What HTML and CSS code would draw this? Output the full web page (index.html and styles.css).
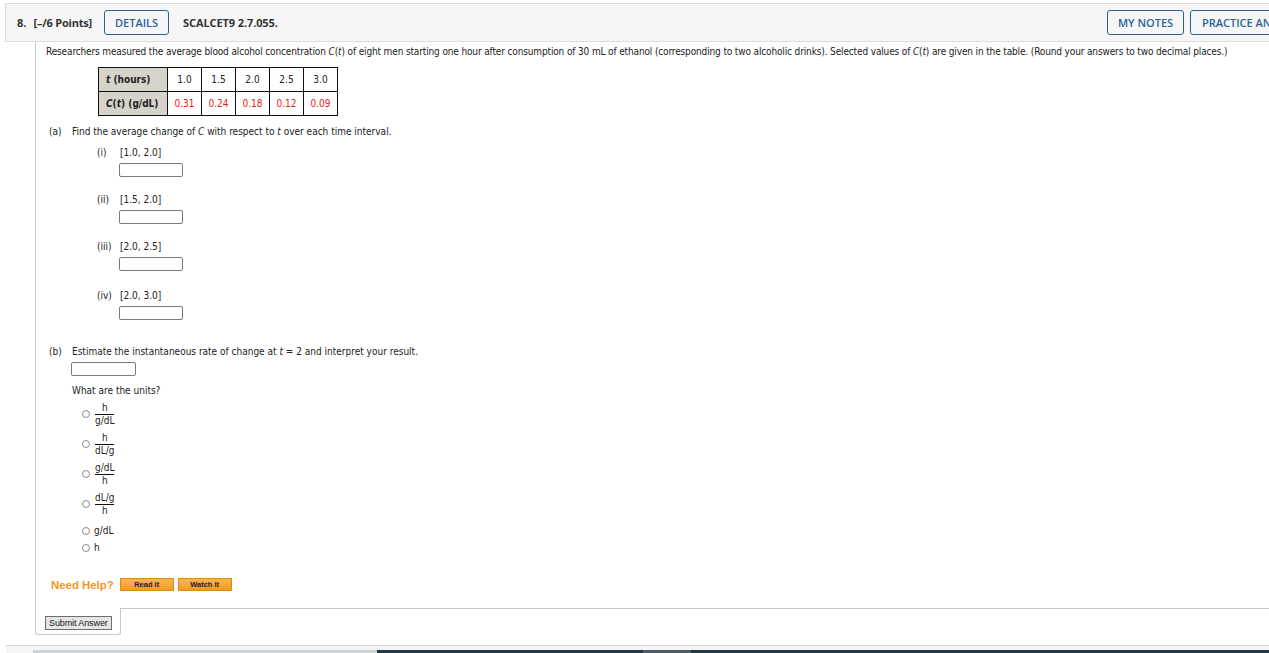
FILE: index.html
```html
<!DOCTYPE html>
<html>
<head>
<meta charset="utf-8">
<link rel="stylesheet" href="styles.css">
</head>
<body>
<div class="page">
  <div class="qhead">
    <span class="qnum">8.</span>
    <span class="qpts">[–/6 Points]</span>
    <span class="btn-out btn-details">DETAILS</span>
    <span class="qcode">SCALCET9 2.7.055.</span>
    <div class="qright">
      <span class="btn-out btn-notes">MY NOTES</span>
      <span class="btn-out btn-practice">PRACTICE ANOTHER</span>
    </div>
  </div>

  <div class="qbody">
    <p class="intro">Researchers measured the average blood alcohol concentration <i>C</i>(<i>t</i>) of eight men starting one hour after consumption of 30 mL of ethanol (corresponding to two alcoholic drinks). Selected values of <i>C</i>(<i>t</i>) are given in the table. (Round your answers to two decimal places.)</p>

    <table class="data">
      <tr>
        <th><i>t</i> (hours)</th>
        <td>1.0</td><td>1.5</td><td>2.0</td><td>2.5</td><td>3.0</td>
      </tr>
      <tr>
        <th><i>C</i>(<i>t</i>) (g/dL)</th>
        <td class="red">0.31</td><td class="red">0.24</td><td class="red">0.18</td><td class="red">0.12</td><td class="red">0.09</td>
      </tr>
    </table>

    <div class="part part-a">
      <span class="plabel">(a)</span>
      <span>Find the average change of <i>C</i> with respect to <i>t</i> over each time interval.</span>
    </div>

    <div class="sub sub-1">
      <div class="subline"><span class="slabel">(i)</span><span>[1.0, 2.0]</span></div>
      <div class="box box-sub"></div>
    </div>
    <div class="sub">
      <div class="subline"><span class="slabel">(ii)</span><span>[1.5, 2.0]</span></div>
      <div class="box box-sub"></div>
    </div>
    <div class="sub">
      <div class="subline"><span class="slabel">(iii)</span><span>[2.0, 2.5]</span></div>
      <div class="box box-sub"></div>
    </div>
    <div class="sub sub-4">
      <div class="subline"><span class="slabel">(iv)</span><span>[2.0, 3.0]</span></div>
      <div class="box box-sub"></div>
    </div>

    <div class="part part-b">
      <span class="plabel">(b)</span>
      <span>Estimate the instantaneous rate of change at <i>t</i> = 2 and interpret your result.</span>
    </div>
    <div class="box box-b"></div>

    <p class="units">What are the units?</p>

    <div class="opts">
      <div class="opt frac-opt"><span class="radio"></span><span class="frac"><span>h</span><span class="den">g/dL</span></span></div>
      <div class="opt frac-opt"><span class="radio"></span><span class="frac"><span>h</span><span class="den">dL/g</span></span></div>
      <div class="opt frac-opt"><span class="radio"></span><span class="frac"><span>g/dL</span><span class="den">h</span></span></div>
      <div class="opt frac-opt"><span class="radio"></span><span class="frac"><span>dL/g</span><span class="den">h</span></span></div>
      <div class="opt plain-opt plain-first"><span class="radio"></span><span>g/dL</span></div>
      <div class="opt plain-opt"><span class="radio"></span><span>h</span></div>
    </div>

    <div class="help">
      <span class="needhelp">Need Help?</span>
      <span class="hbtn">Read It</span>
      <span class="hbtn">Watch It</span>
    </div>
  </div>

  <div class="submitrow">
    <div class="submitcell"><span class="submit">Submit Answer</span></div>
    <div class="submitrest"></div>
  </div>

  <div class="nexthead">
    <div class="nextbar">
      <span class="nb nb1"></span><span class="nb nb2"></span><span class="nb nb3"></span><span class="nb nb4"></span>
    </div>
  </div>
</div>
</body>
</html>
```
FILE: styles.css
```css
html, body {
  margin: 0;
  padding: 0;
  background: #fff;
  overflow: hidden;
}
body {
  width: 1269px;
  height: 653px;
}
.page {
  width: 1341px;
  padding-top: 3px;
  font-family: "DejaVu Sans Condensed", "DejaVu Sans", sans-serif;
  font-size: 10px;
  color: #222;
}
.qhead {
  margin-left: 5px;
  height: 37px;
  border: 1px solid #dcdcdc;
  background: #f6f6f6;
  display: flex;
  align-items: center;
  padding-left: 11px;
  font-family: "Open Sans", sans-serif;
  font-size: 11px;
  color: #333;
}
.qnum { font-weight: 700; margin-right: 7px; margin-top: -1px; }
.qpts { font-weight: 700; margin-right: 12px; letter-spacing: -0.2px; margin-top: -1px; }
.qcode { font-weight: 700; margin-left: 14px; letter-spacing: -0.1px; margin-top: -1px; }
.btn-out {
  display: inline-flex;
  align-items: center;
  justify-content: center;
  box-sizing: border-box;
  height: 25px;
  border: 1px solid #2a6496;
  border-radius: 3px;
  color: #2a6496;
  font-weight: 600;
  font-size: 11px;
}
.btn-details { width: 65px; }
.btn-notes { width: 77px; }
.btn-practice { width: 140px; justify-content: flex-start; padding-left: 11px; }
.qright {
  margin-left: auto;
  display: flex;
  gap: 6px;
  padding-right: 10px;
}

.qbody {
  margin-left: 35px;
  border-left: 1px solid #c8c8c8;
  padding-left: 10px;
  padding-top: 4px;
  height: 562px;
}
.intro {
  margin: 0;
  line-height: 12px;
  white-space: nowrap;
  letter-spacing: -0.14px;
}
.data {
  border-collapse: collapse;
  margin-left: 52px;
  margin-top: 9px;
}
.data th, .data td {
  border: 1px solid #111;
  height: 23px;
  padding: 0;
  font-weight: 400;
  text-align: center;
}
.data th {
  background: #d6d3ca;
  font-weight: 700;
  text-align: left;
  padding-left: 7px;
  width: 61px;
}
.data td { width: 33px; }
.red { color: #e2231a; }

.part {
  display: flex;
  line-height: 12px;
  margin-left: 3px;
}
.plabel { width: 23px; }
.part-a { margin-top: 10px; }
.sub { margin-left: 51px; }
.sub-1 { margin-top: 9px; }
.sub + .sub { margin-top: 17px; }
.sub + .sub-4 { margin-top: 19px; }
.subline { display: flex; line-height: 12px; }
.slabel { width: 23px; }
.box {
  border: 1px solid #7a7a7a;
  border-radius: 2px;
  background: #fff;
  box-sizing: border-box;
}
.box-sub {
  width: 64px;
  height: 14px;
  margin-left: 22px;
  margin-top: 4px;
}
.part-b { margin-top: 26px; }
.box-b {
  width: 65px;
  height: 14px;
  margin-left: 25px;
  margin-top: 4px;
}
.units {
  margin: 9px 0 0 26px;
  line-height: 12px;
}
.opts {
  margin-left: 36px;
  margin-top: 2px;
}
.opt {
  display: flex;
  align-items: center;
}
.frac-opt { height: 30px; }
.plain-opt { height: 17px; line-height: 12px; }
.plain-first { margin-top: 3px; }
.radio {
  width: 6px;
  height: 6px;
  border: 1px solid #8c8c8c;
  border-radius: 50%;
  margin-right: 4px;
}
.frac {
  display: inline-flex;
  flex-direction: column;
  align-items: center;
  line-height: 9px;
  padding: 0 1px;
}
.frac .den {
  border-top: 1px solid #111;
  padding-top: 1px;
  margin-top: 2px;
  align-self: stretch;
  text-align: center;
}
.help {
  display: flex;
  align-items: center;
  margin-left: 5px;
  margin-top: 22px;
}
.needhelp {
  font-family: "Liberation Sans", Arial, sans-serif;
  font-weight: 700;
  font-size: 11.4px;
  color: #f7941e;
  margin-right: 6px;
}
.hbtn {
  display: inline-flex;
  align-items: center;
  justify-content: center;
  width: 52px;
  height: 11px;
  border: 1px solid #dd8a1f;
  background: linear-gradient(#fbb549, #f39b25);
  font-family: "Liberation Sans", Arial, sans-serif;
  font-weight: 700;
  font-size: 7.5px;
  color: #222;
  margin-right: 4px;
}

.submitrow {
  display: flex;
  margin-left: 35px;
  height: 27px;
}
.submitcell {
  width: 86px;
  border-left: 1px solid #c8c8c8;
  border-right: 1px solid #c8c8c8;
  border-bottom: 1px solid #c8c8c8;
  border-radius: 0 0 3px 3px;
  padding: 8px 0 0 9px;
  box-sizing: border-box;
}
.submitrest {
  flex: 1;
  border-top: 1px solid #c8c8c8;
}
.submit {
  display: inline-block;
  background: #e6e6e6;
  border: 1px solid #6e6e6e;
  font-family: "Liberation Sans", Arial, sans-serif;
  font-size: 9px;
  line-height: 12px;
  padding: 0 3px;
  color: #222;
  letter-spacing: -0.1px;
}
.nexthead {
  margin-top: 10px;
  margin-left: 6px;
  border-top: 1px solid #d4d4d4;
  background: #f5f5f5;
  height: 8px;
}
.nextbar {
  display: flex;
  margin-top: 4px;
  margin-left: 27px;
  height: 3px;
}
.nb { height: 3px; }
.nb1 { width: 344px; background: #cfd3d5; }
.nb2 { width: 266px; background: #1f3a45; }
.nb3 { width: 48px; background: #4c5d65; }
.nb4 { flex: 1; background: #1f3a45; }
```
